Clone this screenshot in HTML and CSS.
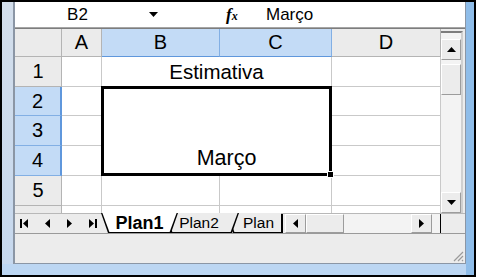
FILE: index.html
```html
<!DOCTYPE html>
<html lang="pt">
  <head>
    <meta charset="UTF-8" />
    <title>Plan1</title>
    <link rel="stylesheet" href="styles.css">
  </head>
  <body>
    <div class="window">
      <div class="frame">
        <div class="excel">
          <div class="formula">
            <div class="namebox">B2</div>
            <div class="dropdown">
              <svg width="9" height="5" viewBox="0 0 9 5"><path d="M0 0H9L4.5 5Z" fill="#000"/></svg>
            </div>
            <div class="fx"><span class="f">f</span><span class="x">x</span></div>
            <div class="value">Março</div>
          </div>

          <div class="sheet">
            <div class="grid">
              <div class="hd corner"></div>
              <div class="hd col">A</div>
              <div class="hd col sel">B</div>
              <div class="hd col sel">C</div>
              <div class="hd col">D</div>

              <div class="hd row">1</div>
              <div class="cell"></div>
              <div class="cell merged1">Estimativa</div>
              <div class="cell"></div>

              <div class="hd row sel">2</div>
              <div class="cell"></div>
              <div class="cell merged2">Março<span class="handle"></span></div>
              <div class="cell"></div>

              <div class="hd row sel">3</div>
              <div class="cell"></div>
              <div class="cell"></div>

              <div class="hd row sel">4</div>
              <div class="cell"></div>
              <div class="cell"></div>

              <div class="hd row">5</div>
              <div class="cell"></div>
              <div class="cell"></div>
              <div class="cell"></div>
              <div class="cell"></div>

              <div class="hd row">6</div>
              <div class="cell"></div>
              <div class="cell"></div>
              <div class="cell"></div>
              <div class="cell"></div>
            </div>

            <div class="vscroll">
              <div class="btn up">
                <svg width="9" height="5" viewBox="0 0 9 5"><path d="M0 5H9L4.5 0Z" fill="#000"/></svg>
              </div>
              <div class="thumb"></div>
              <div class="track"></div>
              <div class="btn down">
                <svg width="9" height="5" viewBox="0 0 9 5"><path d="M0 0H9L4.5 5Z" fill="#000"/></svg>
              </div>
            </div>
          </div>

          <div class="tabbar">
            <div class="nav">
              <svg width="8" height="9" viewBox="0 0 8 9"><path d="M0 0H2V9H0Z M8 0V9L3 4.5Z" fill="#000"/></svg>
              <svg width="5" height="9" viewBox="0 0 5 9"><path d="M5 0V9L0 4.5Z" fill="#000"/></svg>
              <svg width="5" height="9" viewBox="0 0 5 9"><path d="M0 0V9L5 4.5Z" fill="#000"/></svg>
              <svg width="8" height="9" viewBox="0 0 8 9"><path d="M0 0V9L5 4.5Z M6 0H8V9H6Z" fill="#000"/></svg>
            </div>
            <div class="tabs">
              <div class="tab active">Plan1</div>
              <div class="tab t2">Plan2</div>
              <div class="tab t3">Plan</div>
            </div>
            <div class="split"></div>
            <div class="hscroll">
              <div class="hbtn">
                <svg width="5" height="9" viewBox="0 0 5 9"><path d="M5 0V9L0 4.5Z" fill="#000"/></svg>
              </div>
              <div class="hthumb"></div>
              <div class="htrack"></div>
              <div class="hbtn">
                <svg width="5" height="9" viewBox="0 0 5 9"><path d="M0 0V9L5 4.5Z" fill="#000"/></svg>
              </div>
            </div>
            <div class="box"></div>
          </div>

          <div class="status">
            <svg class="grip" width="12" height="12" viewBox="0 0 12 12">
              <path d="M11 2L2 11M11 6L6 11M11 10L10 11" stroke="#9a9a9a" stroke-width="1.2"/>
            </svg>
          </div>
        </div>
      </div>
    </div>
  </body>
</html>
```

FILE: styles.css
```css
body {
  margin: 0;
  background: #fff;
  font-family: "Liberation Sans", Arial, sans-serif;
  color: #000;
}

.window {
  width: 476px;
  height: 277px;
  box-sizing: border-box;
  border: 2px solid #000;
  display: flex;
}

.frame {
  flex: 1;
  display: flex;
  padding: 0 8px 11px 11px;
  background: linear-gradient(to bottom, #d3deeb, #c6d8ee);
  box-shadow: inset -8px 0 0 #8fbde9, inset 0 -11px 0 #bcd6f2;
}

.excel {
  flex: 1;
  display: flex;
  flex-direction: column;
  background: #ececec;
  border-left: 2px solid #8b96a5;
  border-right: 1px solid #8b96a5;
  border-bottom: 1px solid #8b96a5;
  overflow: hidden;
}

/* formula bar */
.formula {
  height: 25px;
  display: flex;
  align-items: center;
  background: #fff;
  border-bottom: 1px solid #a5a5a5;
  font-size: 17px;
}

.namebox {
  width: 125px;
  text-align: center;
}

.dropdown {
  width: 26px;
  display: flex;
  justify-content: center;
}

.fx {
  margin-left: 60px;
  width: 15px;
  font-family: "Liberation Serif", serif;
  font-style: italic;
  font-weight: bold;
}

.fx .f {
  font-size: 17px;
}

.fx .x {
  font-size: 12px;
}

.value {
  padding-left: 25px;
}

/* sheet */
.sheet {
  height: 185px;
  display: flex;
  border-top: 1px solid #7d7d7d;
  box-sizing: border-box;
}

.grid {
  width: 426px;
  display: grid;
  grid-template-columns: 47px 40px 118px 112px 109px;
  grid-template-rows: 28px 30px 29px 30px 30px 30px 30px;
  background: #fff;
  overflow: hidden;
}

.cell,
.hd {
  box-sizing: border-box;
  border-right: 1px solid #c9c9c9;
  border-bottom: 1px solid #c9c9c9;
}

.hd {
  background: #ebebeb;
  border-color: #b4b4b4;
  font-size: 20px;
  display: flex;
  align-items: center;
  justify-content: center;
}

.hd.col.sel {
  background: #c3dbf6;
  border-right-color: #82afe4;
  border-bottom: 1px solid #5f97dc;
}

.hd.row.sel {
  background: #c3dbf6;
  border-bottom-color: #82afe4;
  border-right: 2px solid #5f97dc;
}

.merged1 {
  grid-column: 3 / 5;
  font-size: 20.5px;
  display: flex;
  align-items: center;
  justify-content: center;
}

.merged2 {
  grid-column: 3 / 5;
  grid-row: 3 / 6;
  position: relative;
  margin: -1px 0 0 -1px;
  border: 3px solid #000;
  font-size: 21.5px;
  display: flex;
  align-items: flex-end;
  justify-content: center;
  padding: 0 0 2px 20px;
}

.handle {
  position: absolute;
  right: -5px;
  bottom: -5px;
  width: 5px;
  height: 5px;
  background: #000;
  border: 1px solid #fff;
}

/* scrollbars */
.vscroll {
  width: 22px;
  display: flex;
  flex-direction: column;
  padding-top: 6px;
  border-top: 2px solid #7d7d7d;
  box-sizing: border-box;
  background: #f3f3f3;
  border-right: 2px solid #d0d0d0;
  margin-top: 2px;
}

.btn,
.thumb,
.hbtn,
.hthumb {
  box-sizing: border-box;
  background: #ececec;
  border: 1px solid #fff;
  border-right-color: #9c9c9c;
  border-bottom-color: #9c9c9c;
  display: flex;
  align-items: center;
  justify-content: center;
}

.btn {
  height: 21px;
}

.thumb {
  height: 31px;
  margin-top: 4px;
}

.track {
  flex: 1;
}

/* sheet tabs */
.tabbar {
  height: 21px;
  display: flex;
  background: #ececec;
  border-top: 1px solid #b8b8b8;
  border-bottom: 1px solid #9a9a9a;
  box-sizing: border-box;
}

.nav {
  width: 85px;
  display: flex;
  align-items: center;
  gap: 17px;
  padding-left: 5px;
  box-sizing: border-box;
}

.tabs {
  width: 181px;
  display: flex;
  overflow: hidden;
  margin-top: -1px;
}

.tab {
  position: relative;
  height: 20px;
  width: 77px;
  flex-shrink: 0;
  box-sizing: border-box;
  display: flex;
  align-items: center;
  justify-content: center;
  font-size: 15.5px;
}

.tab::before,
.tab::after {
  content: "";
  position: absolute;
  z-index: -1;
  clip-path: polygon(0 0, 100% 0, calc(100% - 7px) 100%, 7px 100%);
}

.tab::before {
  inset: 0;
  background: #000;
}

.tab::after {
  inset: 0 1.4px 1px 1.4px;
  background: #ececec;
}

.tab.active {
  margin-left: 1px;
  font-weight: bold;
  font-size: 18px;
  z-index: 3;
}

.tab.active::after {
  background: #fff;
}

.tab.t2 {
  width: 75px;
  margin-left: -14px;
  padding-right: 5px;
  z-index: 2;
}

.tab.t3 {
  margin-left: -13px;
  justify-content: flex-start;
  padding-left: 17px;
  z-index: 1;
}

.split {
  width: 4px;
  border-left: 2px solid #000;
  box-sizing: border-box;
}

.hscroll {
  width: 156px;
  display: flex;
  padding-right: 8px;
  border-right: 1px solid #000;
  box-sizing: border-box;
  background: #f3f3f3;
}

.hbtn {
  width: 21px;
}

.hthumb {
  width: 38px;
}

.htrack {
  flex: 1;
}

.box {
  flex: 1;
}

.status {
  flex: 1;
  display: flex;
  justify-content: flex-end;
  align-items: flex-end;
}

.grip {
  margin: 0 1px 1px 0;
}
```
